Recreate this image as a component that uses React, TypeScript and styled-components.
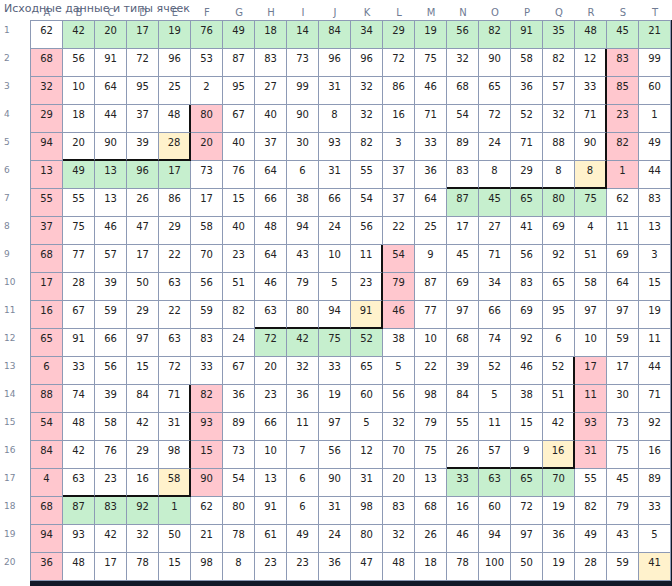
import * as React from 'react';
import styled, { createGlobalStyle } from 'styled-components';

const GlobalStyle = createGlobalStyle`
  body {
    margin: 0;
    background: #ffffff;
    font-family: 'DejaVu Sans', 'Liberation Sans', sans-serif;
  }
`;

type CellKind = 'w' | 'g' | 'p' | 'y';

const COLUMNS = 'ABCDEFGHIJKLMNOPQRST'.split('');

const VALUES: number[][] = [
  [62, 42, 20, 17, 19, 76, 49, 18, 14, 84, 34, 29, 19, 56, 82, 91, 35, 48, 45, 21],
  [68, 56, 91, 72, 96, 53, 87, 83, 73, 96, 96, 72, 75, 32, 90, 58, 82, 12, 83, 99],
  [32, 10, 64, 95, 25, 2, 95, 27, 99, 31, 32, 86, 46, 68, 65, 36, 57, 33, 85, 60],
  [29, 18, 44, 37, 48, 80, 67, 40, 90, 8, 32, 16, 71, 54, 72, 52, 32, 71, 23, 1],
  [94, 20, 90, 39, 28, 20, 40, 37, 30, 93, 82, 3, 33, 89, 24, 71, 88, 90, 82, 49],
  [13, 49, 13, 96, 17, 73, 76, 64, 6, 31, 55, 37, 36, 83, 8, 29, 8, 8, 1, 44],
  [55, 55, 13, 26, 86, 17, 15, 66, 38, 66, 54, 37, 64, 87, 45, 65, 80, 75, 62, 83],
  [37, 75, 46, 47, 29, 58, 40, 48, 94, 24, 56, 22, 25, 17, 27, 41, 69, 4, 11, 13],
  [68, 77, 57, 17, 22, 70, 23, 64, 43, 10, 11, 54, 9, 45, 71, 56, 92, 51, 69, 3],
  [17, 28, 39, 50, 63, 56, 51, 46, 79, 5, 23, 79, 87, 69, 34, 83, 65, 58, 64, 15],
  [16, 67, 59, 29, 22, 59, 82, 63, 80, 94, 91, 46, 77, 97, 66, 69, 95, 97, 97, 19],
  [65, 91, 66, 97, 63, 83, 24, 72, 42, 75, 52, 38, 10, 68, 74, 92, 6, 10, 59, 11],
  [6, 33, 56, 15, 72, 33, 67, 20, 32, 33, 65, 5, 22, 39, 52, 46, 52, 17, 17, 44],
  [88, 74, 39, 84, 71, 82, 36, 23, 36, 19, 60, 56, 98, 84, 5, 38, 51, 11, 30, 71],
  [54, 48, 58, 42, 31, 93, 89, 66, 11, 97, 5, 32, 79, 55, 11, 15, 42, 93, 73, 92],
  [84, 42, 76, 29, 98, 15, 73, 10, 7, 56, 12, 70, 75, 26, 57, 9, 16, 31, 75, 16],
  [4, 63, 23, 16, 58, 90, 54, 13, 6, 90, 31, 20, 13, 33, 63, 65, 70, 55, 45, 89],
  [68, 87, 83, 92, 1, 62, 80, 91, 6, 31, 98, 83, 68, 16, 60, 72, 19, 82, 79, 33],
  [94, 93, 42, 32, 50, 21, 78, 61, 49, 24, 80, 32, 26, 46, 94, 97, 36, 49, 43, 5],
  [36, 48, 17, 78, 15, 98, 8, 23, 23, 36, 47, 48, 18, 78, 100, 50, 19, 28, 59, 41],
];

// one char per column: w = plain, g = green, p = pink, y = yellow
const KINDS: string[] = [
  'wggggggggggggggggggg',
  'pwwwwwwwwwwwwwwwwwpw',
  'pwwwwwwwwwwwwwwwwwpw',
  'pwwwwpwwwwwwwwwwwwpw',
  'pwwwypwwwwwwwwwwwwpw',
  'pggggwwwwwwwwwwwwypw',
  'pwwwwwwwwwwwwgggggww',
  'pwwwwwwwwwwwwwwwwwww',
  'pwwwwwwwwwwpwwwwwwww',
  'pwwwwwwwwwwpwwwwwwww',
  'pwwwwwwwwwypwwwwwwww',
  'pwwwwwwggggwwwwwwwww',
  'pwwwwwwwwwwwwwwwwpww',
  'pwwwwpwwwwwwwwwwwpww',
  'pwwwwpwwwwwwwwwwwpww',
  'pwwwwpwwwwwwwwwwypww',
  'pwwwypwwwwwwwggggwww',
  'pggggwwwwwwwwwwwwwww',
  'pwwwwwwwwwwwwwwwwwww',
  'pwwwwwwwwwwwwwwwwwwy',
];

// framed windows: right and bottom edges get a heavy line
const REGIONS = [
  { r0: 3, r1: 4, c0: 1, c1: 4 },
  { r0: 1, r1: 5, c0: 13, c1: 17 },
  { r0: 8, r1: 10, c0: 7, c1: 10 },
  { r0: 12, r1: 15, c0: 13, c1: 16 },
  { r0: 13, r1: 16, c0: 1, c1: 4 },
];

const FILL: Record<CellKind, string> = {
  w: '#ffffff',
  g: '#c6efce',
  p: '#ffc7ce',
  y: '#fff2cc',
};

const GRID_LINE = '#8d9ab5';
const HEAVY_LINE = '#111111';

const Figure = styled.div`
  position: relative;
  width: 672px;
  height: 586px;
  overflow: hidden;
  display: grid;
  grid-template-columns: 30px auto;
  grid-template-rows: 20px auto;
`;

const Title = styled.div`
  position: absolute;
  top: 2px;
  left: 4px;
  font-size: 11px;
  line-height: 14px;
  color: #56617a;
  white-space: nowrap;
`;

const Corner = styled.div``;

const ColumnHeaders = styled.div`
  display: grid;
  grid-template-columns: repeat(20, 32px);
  padding-left: 1px;
`;

const ColumnLetter = styled.div`
  padding-top: 6px;
  font-size: 10px;
  line-height: 14px;
  text-align: center;
  color: #6f7b93;
`;

const RowLabels = styled.div`
  display: grid;
  grid-template-rows: repeat(20, 28px);
  padding-top: 1px;
`;

const RowLabel = styled.div`
  padding: 2px 0 0 4px;
  font-size: 9px;
  line-height: 14px;
  color: #7b869a;
`;

const TableFrame = styled.div`
  justify-self: start;
  align-self: start;
  border-right: 3px solid #111827;
  border-bottom: 8px solid #111827;
`;

const Table = styled.div`
  display: grid;
  grid-template-columns: repeat(20, 32px);
  grid-template-rows: repeat(20, 28px);
  border-top: 1px solid ${GRID_LINE};
  border-left: 1px solid ${GRID_LINE};
`;

const Cell = styled.div<{ $kind: CellKind; $heavyRight: boolean; $heavyBottom: boolean }>`
  box-sizing: border-box;
  padding-top: 3px;
  font-size: 10px;
  line-height: 14px;
  text-align: center;
  color: #222222;
  background: ${({ $kind }) => FILL[$kind]};
  border-right: ${({ $heavyRight }) => ($heavyRight ? `2px solid ${HEAVY_LINE}` : `1px solid ${GRID_LINE}`)};
  border-bottom: ${({ $heavyBottom }) => ($heavyBottom ? `2px solid ${HEAVY_LINE}` : `1px solid ${GRID_LINE}`)};
`;

const isHeavyRight = (r: number, c: number) =>
  REGIONS.some((g) => c === g.c1 && r >= g.r0 && r <= g.r1);

const isHeavyBottom = (r: number, c: number) =>
  REGIONS.some((g) => r === g.r1 && c >= g.c0 && c <= g.c1);

export default function App() {
  return (
    <>
      <GlobalStyle />
      <Figure>
        <Corner />
        <ColumnHeaders>
          {COLUMNS.map((letter) => (
            <ColumnLetter key={letter}>{letter}</ColumnLetter>
          ))}
        </ColumnHeaders>
        <RowLabels>
          {VALUES.map((_, r) => (
            <RowLabel key={r}>{r + 1}</RowLabel>
          ))}
        </RowLabels>
        <TableFrame>
          <Table>
            {VALUES.map((row, r) =>
              row.map((value, c) => (
                <Cell
                  key={`${r}-${c}`}
                  $kind={KINDS[r][c] as CellKind}
                  $heavyRight={isHeavyRight(r, c)}
                  $heavyBottom={isHeavyBottom(r, c)}
                >
                  {value}
                </Cell>
              ))
            )}
          </Table>
        </TableFrame>
        <Title>Исходные данные и типы ячеек</Title>
      </Figure>
    </>
  );
}
